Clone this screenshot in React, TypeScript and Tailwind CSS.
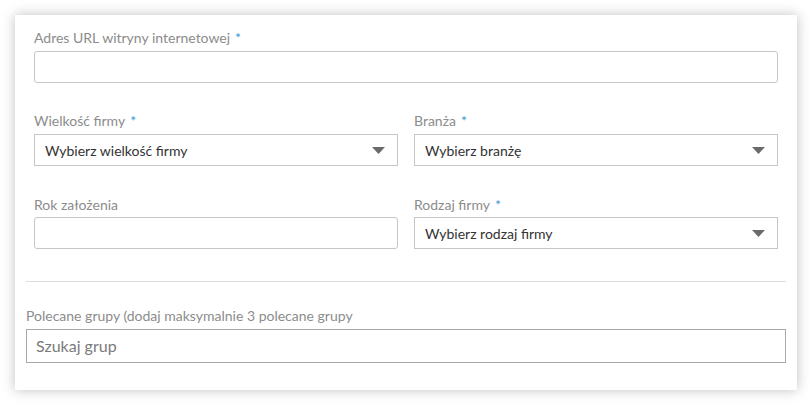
const Req = () => <span className="ml-[5px] text-[#3b97d3]">*</span>;

function Label({ text, required }: { text: string; required?: boolean }) {
  return (
    <div className="h-5 text-[14px] leading-5 text-[#8c8c8c]">
      {text}
      {required && <Req />}
    </div>
  );
}

function Select({ value }: { value: string }) {
  return (
    <div className="flex h-[32px] items-center justify-between border border-[#c6c6c6] bg-white pl-[10px] pr-[12px] text-[14px] text-[#333]">
      <span>{value}</span>
      <svg width="13" height="7" viewBox="0 0 13 7">
        <path d="M0 0h13L6.5 7z" fill="#6b6b6b" />
      </svg>
    </div>
  );
}

const TextBox = () => <div className="h-[32px] rounded-[3px] border border-[#c6c6c6] bg-white" />;

export default function App() {
  return (
    <div className="h-[405px] w-[812px] bg-white p-[15px]" style={{ fontFamily: 'Lato, "Noto Sans", sans-serif' }}>
      <div className="h-[375px] w-[782px] bg-white shadow-[0_0_12px_rgba(0,0,0,0.25)]">
        <div className="px-[19px] pt-[13px]">
          <Label text="Adres URL witryny internetowej" required />
          <div className="mt-[3px]">
            <TextBox />
          </div>

          <div className="mt-[28px] grid grid-cols-2 gap-x-[16px]">
            <div>
              <Label text="Wielkość firmy" required />
              <div className="mt-[3px]">
                <Select value="Wybierz wielkość firmy" />
              </div>
            </div>
            <div>
              <Label text="Branża" required />
              <div className="mt-[3px]">
                <Select value="Wybierz branżę" />
              </div>
            </div>
          </div>

          <div className="mt-[29px] grid grid-cols-2 gap-x-[16px]">
            <div>
              <Label text="Rok założenia" />
              <div className="mt-[2px]">
                <TextBox />
              </div>
            </div>
            <div>
              <Label text="Rodzaj firmy" required />
              <div className="mt-[2px]">
                <Select value="Wybierz rodzaj firmy" />
              </div>
            </div>
          </div>
        </div>

        <div className="mx-[11px] mt-[32px] border-t border-[#dcdcdc]" />

        <div className="px-[11px] pt-[24px]">
          <Label text="Polecane grupy (dodaj maksymalnie 3 polecane grupy" />
          <div className="mt-[3px] flex h-[34px] items-center border border-[#a8a8a8] px-[9px] text-[16px] text-[#7a7a7a]">
            Szukaj grup
          </div>
        </div>
      </div>
    </div>
  );
}
